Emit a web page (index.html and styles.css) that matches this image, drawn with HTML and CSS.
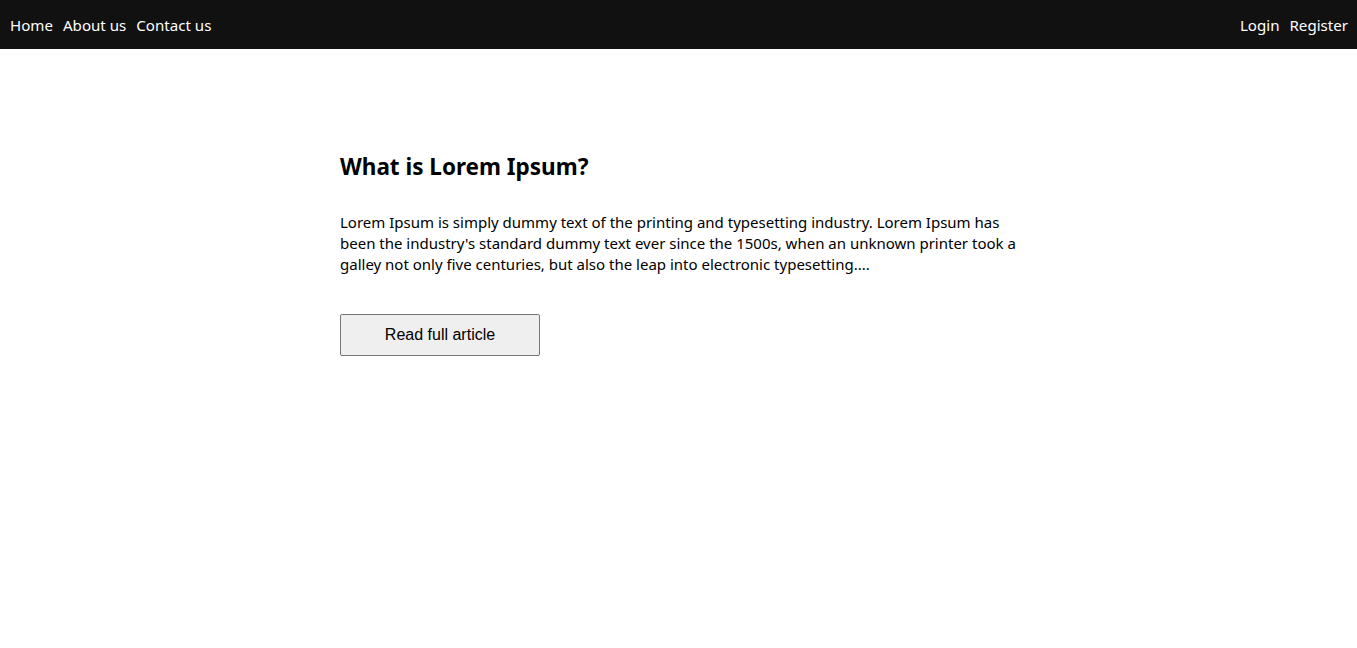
FILE: index.html
```html
<!DOCTYPE html>
<html lang="en">
<head>
<meta charset="utf-8">
<title>Lorem Ipsum</title>
<link rel="stylesheet" href="styles.css">
</head>
<body>
<header class="topbar">
  <nav class="nav-left">
    <a href="#" class="nav-link">Home</a>
    <a href="#" class="nav-link">About us</a>
    <a href="#" class="nav-link">Contact us</a>
  </nav>
  <nav class="nav-right">
    <a href="#" class="nav-link">Login</a>
    <a href="#" class="nav-link">Register</a>
  </nav>
</header>
<main class="content">
  <article class="article">
    <h2 class="article-title">What is Lorem Ipsum?</h2>
    <p class="article-text">Lorem Ipsum is simply dummy text of the printing and typesetting industry. Lorem Ipsum has been the industry's standard dummy text ever since the 1500s, when an unknown printer took a galley not only five centuries, but also the leap into electronic typesetting....</p>
    <button class="read-btn" type="button">Read full article</button>
  </article>
</main>
</body>
</html>
```
FILE: styles.css
```css
html, body {
  margin: 0;
  padding: 0;
  background: #ffffff;
}
body {
  font-family: "Noto Sans", "Open Sans", sans-serif;
  color: #000;
}
.topbar {
  height: 49px;
  background: #111111;
  display: flex;
  justify-content: space-between;
  align-items: center;
  padding: 0 9px 0 10px;
  box-sizing: border-box;
}
.nav-left, .nav-right {
  display: flex;
  gap: 10px;
}
.nav-link {
  color: #ffffff;
  text-decoration: none;
  font-size: 15.1px;
  line-height: 20px;
}
.content {
  display: flex;
  justify-content: center;
}
.article {
  width: 677px;
  padding-top: 102px;
}
.article-title {
  margin: 0;
  font-size: 22.5px;
  line-height: 32px;
  font-weight: 700;
}
.article-text {
  margin: 29px 0 0;
  font-size: 15px;
  line-height: 21px;
}
.read-btn {
  margin-top: 39px;
  width: 200px;
  height: 42px;
  background: #efefef;
  border: 1px solid #767676;
  border-radius: 2px;
  font-family: "Liberation Sans", Arial, sans-serif;
  font-size: 16px;
  color: #000;
  padding: 0;
}
```
